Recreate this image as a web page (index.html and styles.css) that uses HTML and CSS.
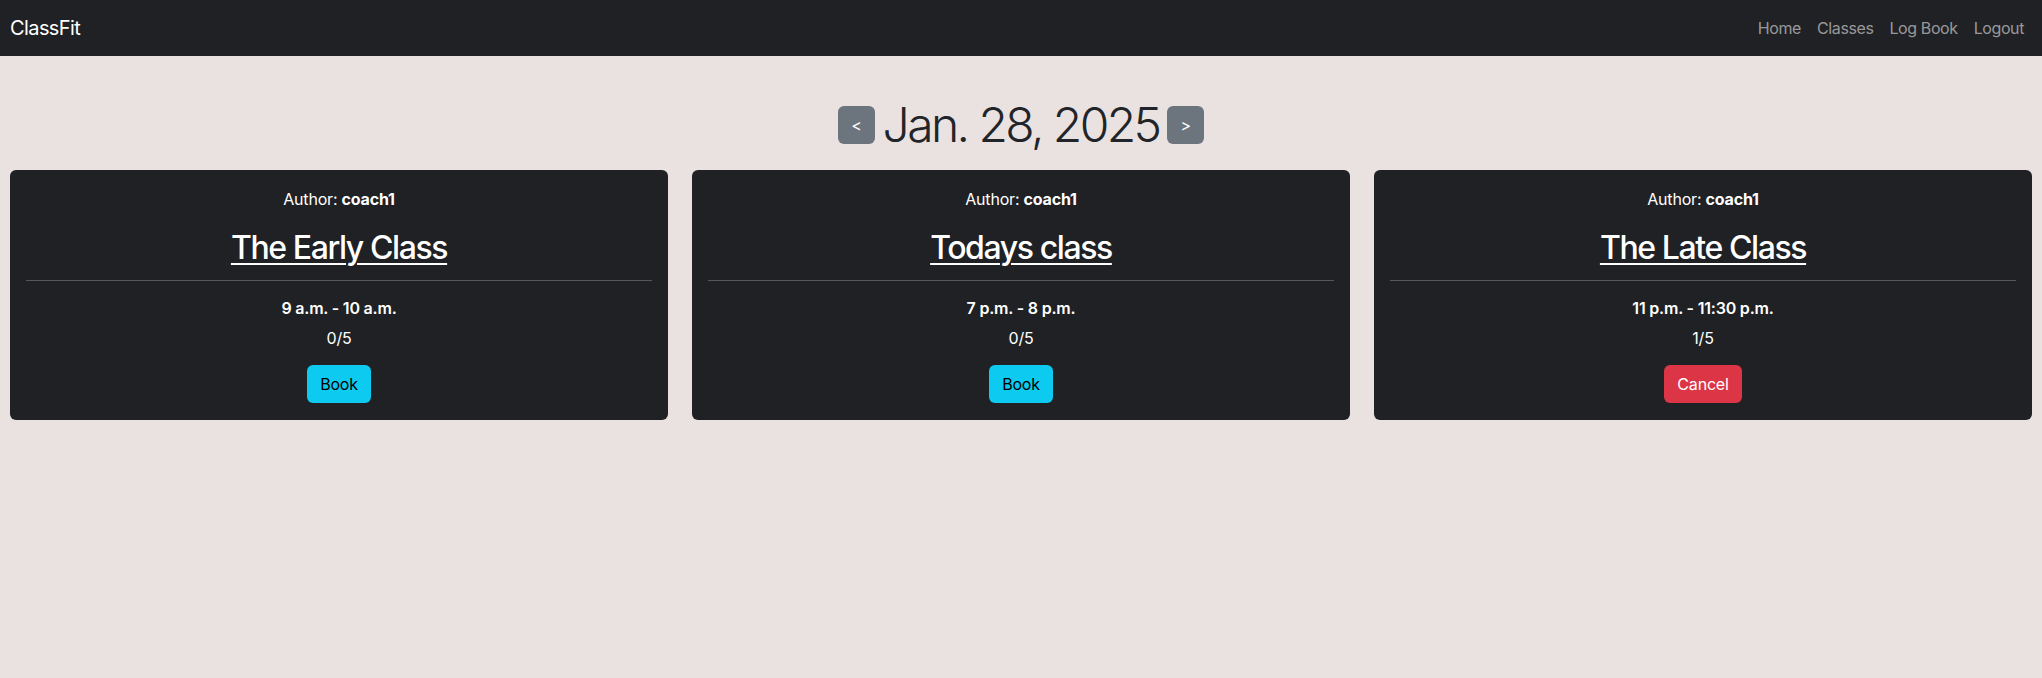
FILE: index.html
```html
<!DOCTYPE html>
<html lang="en">
<head>
<meta charset="utf-8">
<title>ClassFit</title>
<link rel="stylesheet" href="styles.css">
</head>
<body>
<nav class="navbar">
  <a class="brand" href="#">ClassFit</a>
  <ul class="nav-links">
    <li><a class="nav-link" href="#">Home</a></li>
    <li><a class="nav-link" href="#">Classes</a></li>
    <li><a class="nav-link" href="#">Log Book</a></li>
    <li><a class="nav-link" href="#">Logout</a></li>
  </ul>
</nav>
<main class="page">
  <div class="date-row">
    <a class="btn btn-secondary" href="#">&lt;</a>
    <h1 class="date-title">Jan. 28, 2025</h1>
    <a class="btn btn-secondary" href="#">&gt;</a>
  </div>
  <div class="cards">
    <div class="card">
      <p class="author">Author: <strong>coach1</strong></p>
      <h2 class="class-title"><a href="#">The Early Class</a></h2>
      <hr class="divider">
      <p class="time">9 a.m. - 10 a.m.</p>
      <p class="count">0/5</p>
      <a class="btn btn-info" href="#">Book</a>
    </div>
    <div class="card">
      <p class="author">Author: <strong>coach1</strong></p>
      <h2 class="class-title"><a href="#">Todays class</a></h2>
      <hr class="divider">
      <p class="time">7 p.m. - 8 p.m.</p>
      <p class="count">0/5</p>
      <a class="btn btn-info" href="#">Book</a>
    </div>
    <div class="card">
      <p class="author">Author: <strong>coach1</strong></p>
      <h2 class="class-title"><a href="#">The Late Class</a></h2>
      <hr class="divider">
      <p class="time">11 p.m. - 11:30 p.m.</p>
      <p class="count">1/5</p>
      <a class="btn btn-danger" href="#">Cancel</a>
    </div>
  </div>
</main>
</body>
</html>
```

FILE: styles.css
```css
* { box-sizing: border-box; }

html, body {
  margin: 0;
  padding: 0;
}

body {
  background: #eae2e1;
  color: #212529;
  font-family: Inter, "Noto Sans", sans-serif;
  font-size: 16px;
  line-height: 1.5;
}

.navbar {
  height: 56px;
  background: #1f2124;
  display: flex;
  align-items: center;
  justify-content: space-between;
  padding: 0 10px;
}

.brand {
  color: #fff;
  font-size: 20px;
  text-decoration: none;
  letter-spacing: -0.6px;
}

.nav-links {
  list-style: none;
  margin: 0;
  padding: 0;
  display: flex;
}

.nav-link {
  display: block;
  padding: 8px 8px;
  color: rgba(255, 255, 255, 0.55);
  text-decoration: none;
  letter-spacing: -0.4px;
}

.page {
  padding: 0 10px;
}

.date-row {
  display: flex;
  justify-content: center;
  align-items: center;
  gap: 8px;
  margin-top: 45px;
  height: 48px;
}

.date-title {
  margin: 0;
  font-size: 48px;
  font-weight: 300;
  line-height: 1;
  letter-spacing: -2.6px;
  color: #212529;
}

.btn {
  display: inline-block;
  padding: 6px 12px;
  font-size: 16px;
  line-height: 24px;
  border: 1px solid transparent;
  border-radius: 6px;
  text-decoration: none;
  letter-spacing: -0.2px;
}

.btn-secondary {
  background: #6c757d;
  color: #fff;
}

.btn-info {
  background: #0dcaf0;
  color: #000;
}

.btn-danger {
  background: #dc3545;
  color: #fff;
}

.cards {
  display: grid;
  grid-template-columns: repeat(3, 1fr);
  gap: 24px;
  margin-top: 21px;
}

.card {
  background: #1f2124;
  border-radius: 6px;
  color: #fff;
  text-align: center;
  padding: 17px 12px 17px;
  display: flex;
  flex-direction: column;
  align-items: center;
}

.author {
  margin: 0;
  letter-spacing: -0.2px;
}

.author strong {
  font-weight: 700;
}

.class-title {
  margin: 18px 0 0;
  font-size: 32px;
  font-weight: 500;
  line-height: 38px;
  letter-spacing: -1.4px;
}

.class-title a {
  color: #fff;
  text-decoration: underline;
  text-decoration-thickness: 2px;
  text-underline-offset: 4px;
}

.divider {
  align-self: stretch;
  margin: 13px 4px 15px;
  border: 0;
  border-top: 1px solid #56595c;
}

.time {
  margin: 0;
  font-weight: 600;
  letter-spacing: -0.2px;
}

.count {
  margin: 6px 0 15px;
  letter-spacing: -0.2px;
}
```
